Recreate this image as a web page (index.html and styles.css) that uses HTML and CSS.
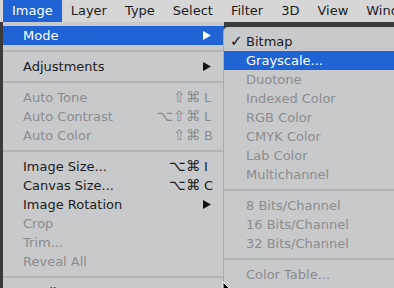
FILE: index.html
```html
<!DOCTYPE html>
<html>
<head>
<meta charset="utf-8">
<link rel="stylesheet" href="styles.css">
</head>
<body>
<div class="screen">
  <div class="menubar">
    <span class="mb-item active">Image</span>
    <span class="mb-item">Layer</span>
    <span class="mb-item">Type</span>
    <span class="mb-item">Select</span>
    <span class="mb-item">Filter</span>
    <span class="mb-item">3D</span>
    <span class="mb-item">View</span>
    <span class="mb-item">Window</span>
  </div>

  <div class="menu main">
    <div class="row selected"><span class="label">Mode</span><svg class="arrow" viewBox="0 0 8 9"><polygon points="0,0 8,4.5 0,9"/></svg></div>
    <div class="sep"></div>
    <div class="row"><span class="label">Adjustments</span><svg class="arrow" viewBox="0 0 8 9"><polygon points="0,0 8,4.5 0,9"/></svg></div>
    <div class="sep"></div>
    <div class="row disabled"><span class="label">Auto Tone</span><span class="mods">⇧⌘</span><span class="key">L</span></div>
    <div class="row disabled"><span class="label">Auto Contrast</span><span class="mods">⌥⇧⌘</span><span class="key">L</span></div>
    <div class="row disabled"><span class="label">Auto Color</span><span class="mods">⇧⌘</span><span class="key">B</span></div>
    <div class="sep"></div>
    <div class="row"><span class="label">Image Size...</span><span class="mods">⌥⌘</span><span class="key">I</span></div>
    <div class="row"><span class="label">Canvas Size...</span><span class="mods">⌥⌘</span><span class="key">C</span></div>
    <div class="row"><span class="label">Image Rotation</span><svg class="arrow" viewBox="0 0 8 9"><polygon points="0,0 8,4.5 0,9"/></svg></div>
    <div class="row disabled"><span class="label">Crop</span></div>
    <div class="row disabled"><span class="label">Trim...</span></div>
    <div class="row disabled"><span class="label">Reveal All</span></div>
    <div class="sep"></div>
    <div class="row"><span class="label">Duplicate...</span></div>
  </div>

  <div class="menu sub">
    <div class="row"><span class="check">✓</span><span class="label">Bitmap</span></div>
    <div class="row selected"><span class="check"></span><span class="label">Grayscale...</span></div>
    <div class="row disabled"><span class="check"></span><span class="label">Duotone</span></div>
    <div class="row disabled"><span class="check"></span><span class="label">Indexed Color</span></div>
    <div class="row disabled"><span class="check"></span><span class="label">RGB Color</span></div>
    <div class="row disabled"><span class="check"></span><span class="label">CMYK Color</span></div>
    <div class="row disabled"><span class="check"></span><span class="label">Lab Color</span></div>
    <div class="row disabled"><span class="check"></span><span class="label">Multichannel</span></div>
    <div class="sep"></div>
    <div class="row disabled"><span class="check"></span><span class="label">8 Bits/Channel</span></div>
    <div class="row disabled"><span class="check"></span><span class="label">16 Bits/Channel</span></div>
    <div class="row disabled"><span class="check"></span><span class="label">32 Bits/Channel</span></div>
    <div class="sep"></div>
    <div class="row disabled"><span class="check"></span><span class="label">Color Table...</span></div>
  </div>

  <svg class="cursor" viewBox="0 0 12 18"><path d="M1 1 L1 15 L4.5 11.5 L7 17 L9 16 L6.5 10.8 L11 10.8 Z" fill="#000" stroke="#fff" stroke-width="1"/></svg>
</div>
</body>
</html>
```

FILE: styles.css
```css
html, body {
  margin: 0;
  padding: 0;
}
body {
  background: #3b3b3c;
  font-family: "DejaVu Sans", "Liberation Sans", sans-serif;
  font-size: 13px;
  color: #1c1c1c;
  overflow: hidden;
}
.screen {
  position: relative;
  width: 394px;
  height: 288px;
  overflow: hidden;
  background: #3b3b3c;
}
.menubar {
  display: flex;
  height: 22px;
  padding-left: 3px;
  background: #d6d6d7;
  white-space: nowrap;
  overflow: hidden;
}
.mb-item {
  padding: 0 9px;
  line-height: 22px;
  color: #1c1c1c;
}
.mb-item.active {
  background: #1f63d4;
  color: #fff;
}
.menu {
  background: #c8c9cb;
}
.menu.main {
  margin-left: 3px;
  width: 221px;
  padding-top: 4px;
  display: flex;
  flex-direction: column;
}
.menu.sub {
  position: absolute;
  left: 224px;
  top: 27px;
  width: 172px;
  height: 270px;
  padding-top: 5px;
  border-top-left-radius: 5px;
  box-shadow: -1px 0 0 #a9aaac;
  display: flex;
  flex-direction: column;
}
.row {
  display: flex;
  align-items: center;
  height: 19px;
  line-height: 19px;
  padding-left: 20px;
  padding-right: 8px;
  white-space: nowrap;
  flex: none;
}
.sub .row {
  padding-left: 6px;
}
.check {
  width: 16px;
  flex: none;
  font-size: 15px;
  font-weight: bold;
  color: #111;
}
.label {
  flex: 1;
}
.row.disabled {
  color: #8b8c8e;
}
.row.selected {
  background: #1f63d4;
  color: #fff;
}
.mods {
  text-align: right;
  font-size: 14.5px;
  letter-spacing: 0.5px;
}
.key {
  width: 12px;
  padding-left: 3px;
  flex: none;
}
.arrow {
  width: 8px;
  height: 9px;
  margin-right: 5px;
  fill: #111;
}
.row.selected .arrow {
  fill: #fff;
}
.sep {
  height: 12px;
  display: flex;
  align-items: center;
  flex: none;
}
.sep::after {
  content: "";
  flex: 1;
  height: 2px;
  background: #b2b3b5;
}
.cursor {
  position: absolute;
  left: 222px;
  top: 281px;
  width: 12px;
  height: 18px;
}
```
